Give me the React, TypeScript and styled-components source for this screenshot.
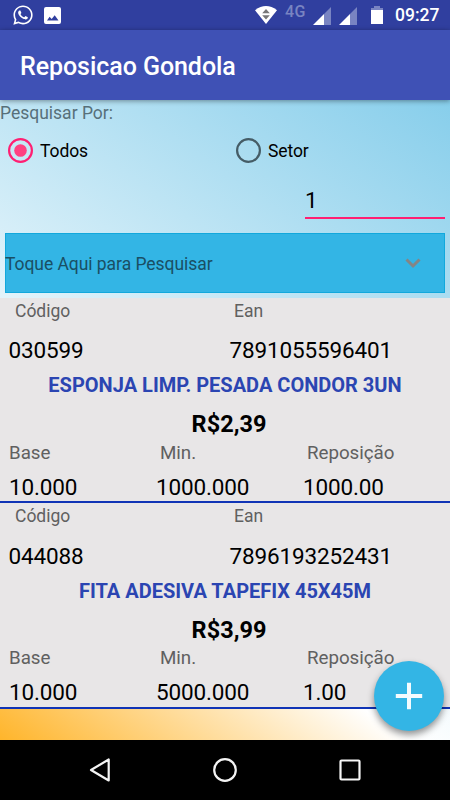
import React from "react";
import styled, { createGlobalStyle } from "styled-components";
import { FaWhatsapp } from "react-icons/fa";

const GlobalStyle = createGlobalStyle`
  * { box-sizing: border-box; }
  body { margin: 0; background: #000; font-family: Roboto, "Noto Sans", sans-serif; }
`;

const Screen = styled.div`
  position: relative;
  display: flex;
  flex-direction: column;
  width: 450px;
  height: 800px;
  overflow: hidden;
`;

const StatusBar = styled.header`
  display: flex;
  align-items: center;
  justify-content: space-between;
  height: 30px;
  flex: none;
  padding: 0 10px 0 12px;
  background: #303f9f;
  color: #fff;
`;

const StatusGroup = styled.div`
  display: flex;
  align-items: center;
  svg { display: block; }
`;

const NotificationGroup = styled(StatusGroup)`
  gap: 10px;
`;

const Network = styled.span`
  width: 22px;
  height: 30px;
  margin: 0 6px 0 8px;
  color: #7984c2;
  font-size: 16px;
  font-weight: 500;
  line-height: 23px;
  letter-spacing: 0.4px;
`;

const SignalPair = styled.div`
  display: flex;
  gap: 8px;
  margin: 2px 14px 0 0;
`;

const Clock = styled.time`
  width: 45px;
  margin-left: 12px;
  font-size: 17.5px;
  font-weight: 500;
  line-height: 32px;
  white-space: nowrap;
`;

const AppBar = styled.div`
  z-index: 1;
  display: flex;
  align-items: center;
  height: 70px;
  flex: none;
  padding: 4px 0 0 20px;
  background: #3f51b5;
  box-shadow: 0 1px 5px rgba(0, 0, 0, 0.4);
`;

const Title = styled.h1`
  margin: 0;
  color: #fff;
  font-size: 25px;
  font-weight: 500;
  line-height: 30px;
  letter-spacing: -0.06px;
`;

const Content = styled.main`
  display: flex;
  flex-direction: column;
  height: 640px;
  flex: none;
  background: linear-gradient(35.11deg, #ffb52b 0%, #ffffff 30%, #87ceeb 100%);
`;

const FilterLabel = styled.div`
  height: 25px;
  color: #57707a;
  font-size: 17.5px;
  line-height: 26px;
`;

const Options = styled.div`
  display: grid;
  grid-template-columns: 228px 1fr;
  height: 50px;
`;

const Option = styled.label`
  display: flex;
  align-items: center;
  gap: 7.5px;
  padding: 1px 0 0 7.5px;
  color: #000;
  font-size: 17.5px;
  line-height: 20px;
  letter-spacing: -0.1px;
`;

const RadioIcon = styled.svg`
  display: block;
  width: 25px;
  height: 25px;
`;

const QuantityField = styled.div`
  width: 140px;
  height: 44px;
  margin: 0 5px 0 auto;
  border-bottom: 2px solid #ff1f72;
  color: #000;
  font-size: 22.5px;
  line-height: 51px;
`;

const Spinner = styled.div`
  display: flex;
  align-items: center;
  justify-content: space-between;
  height: 60px;
  margin: 14px 5px 4.5px;
  padding-right: 23px;
  border: 1px solid #12a8dc;
  background: #33b5e5;
  color: #1a4f64;
  font-size: 17.5px;
  line-height: 22px;
`;

const SpinnerText = styled.span`
  margin: 1px 0 0 -1px;
  letter-spacing: -0.05px;
`;

const ItemCard = styled.article`
  display: flex;
  flex-direction: column;
  height: 205.5px;
  flex: none;
  border-bottom: 2px solid #1034b6;
  background: #e8e6e7;
`;

const CodeLabels = styled.div`
  display: grid;
  grid-template-columns: 219px 1fr;
  padding-left: 15px;
  color: #606060;
  font-size: 17.5px;
  line-height: 26px;
`;

const CodeValues = styled.div`
  display: grid;
  grid-template-columns: 221px 1fr;
  margin-top: 9.5px;
  padding-left: 8.5px;
  color: #000;
  font-size: 22.5px;
  line-height: 35px;
  letter-spacing: -0.15px;
`;

const ProductName = styled.div`
  margin-top: 5px;
  color: #2b45b2;
  font-size: 20px;
  font-weight: 700;
  line-height: 25px;
  text-align: center;
  white-space: nowrap;
`;

const Price = styled.div`
  margin-top: 8px;
  padding-left: 8px;
  color: #000;
  font-size: 23.5px;
  font-weight: 700;
  line-height: 36px;
  text-align: center;
`;

const StockLabels = styled.div`
  display: grid;
  grid-template-columns: 151px 147px 1fr;
  margin-top: 0.9px;
  padding-left: 9px;
  color: #606060;
  font-size: 18.75px;
  line-height: 20px;
  letter-spacing: -0.04px;
`;

const StockValues = styled.div`
  display: grid;
  grid-template-columns: 147px 147px 1fr;
  margin-top: 10.9px;
  padding-left: 9px;
  color: #000;
  font-size: 22.5px;
  line-height: 26px;
  letter-spacing: -0.15px;
`;

const AddButton = styled.button`
  position: absolute;
  right: 6px;
  bottom: 69px;
  display: grid;
  place-items: center;
  width: 70px;
  height: 70px;
  padding: 0;
  border: 0;
  border-radius: 50%;
  background: #33b5e5;
  box-shadow: 0 4px 7px rgba(0, 0, 0, 0.42);
`;

const NavigationBar = styled.nav`
  z-index: 1;
  display: flex;
  align-items: center;
  justify-content: center;
  gap: 101px;
  height: 60px;
  flex: none;
  background: #000;
`;

interface Product {
  code: string;
  ean: string;
  name: string;
  price: string;
  base: string;
  min: string;
  restock: string;
}

const products: Product[] = [
  { code: "030599", ean: "7891055596401", name: "ESPONJA LIMP. PESADA CONDOR 3UN", price: "R$2,39", base: "10.000", min: "1000.000", restock: "1000.00" },
  { code: "044088", ean: "7896193252431", name: "FITA ADESIVA TAPEFIX 45X45M", price: "R$3,99", base: "10.000", min: "5000.000", restock: "1.00" },
];

const Radio = ({ checked = false }: { checked?: boolean }) => (
  <RadioIcon viewBox="0 0 25 25">
    <circle cx="12.5" cy="12.5" r="11.4" fill="none" stroke={checked ? "#ff1f72" : "#455c66"} strokeWidth="2.2" />
    {checked && <circle cx="12.5" cy="12.5" r="6.3" fill="#ff4081" />}
  </RadioIcon>
);

const SignalIcon = () => (
  <svg width="18" height="18" viewBox="0 0 18 18">
    <path d="M0 18 11 7v11z" fill="#fff" />
    <path d="M11 7 18 0v18h-7z" fill="#7984c2" />
  </svg>
);

const WifiIcon = () => (
  <svg width="22" height="18" viewBox="0 0 22 18">
    <path d="M0 4.2Q11-4 22 4.2L11 18Z" fill="#fff" />
    <path d="m7.2 7.2 3.8-4.2 3.8 4.2ZM7.2 9.2h7.6L11 13.4Z" fill="#777" />
  </svg>
);

const BatteryIcon = () => (
  <svg width="12" height="18" viewBox="0 0 12 18">
    <path d="M3 0h6v2h3v3H0V2h3z" fill="#7984c2" />
    <path d="M0 4h12v14H0z" fill="#fff" />
  </svg>
);

const Item = ({ product }: { product: Product }) => (
  <ItemCard>
    <CodeLabels><span>Código</span><span>Ean</span></CodeLabels>
    <CodeValues><span>{product.code}</span><span>{product.ean}</span></CodeValues>
    <ProductName>{product.name}</ProductName>
    <Price>{product.price}</Price>
    <StockLabels><span>Base</span><span>Min.</span><span>Reposição</span></StockLabels>
    <StockValues><span>{product.base}</span><span>{product.min}</span><span>{product.restock}</span></StockValues>
  </ItemCard>
);

export default function App() {
  return (
    <>
      <GlobalStyle />
      <Screen>
        <StatusBar>
          <NotificationGroup>
            <FaWhatsapp size={22} />
            <svg width="17" height="17" viewBox="0 0 17 17">
              <path fillRule="evenodd" fill="#fff" d="M2 0h13a2 2 0 0 1 2 2v13a2 2 0 0 1-2 2H2a2 2 0 0 1-2-2V2a2 2 0 0 1 2-2ZM3 13.5h11.5L10.7 8.3 7.7 12 5.6 9.7Z" />
            </svg>
          </NotificationGroup>
          <StatusGroup>
            <WifiIcon />
            <Network>4G</Network>
            <SignalPair><SignalIcon /><SignalIcon /></SignalPair>
            <BatteryIcon />
            <Clock>09:27</Clock>
          </StatusGroup>
        </StatusBar>
        <AppBar><Title>Reposicao Gondola</Title></AppBar>
        <Content>
          <FilterLabel>Pesquisar Por:</FilterLabel>
          <Options>
            <Option><Radio checked />Todos</Option>
            <Option><Radio />Setor</Option>
          </Options>
          <QuantityField>1</QuantityField>
          <Spinner>
            <SpinnerText>Toque Aqui para Pesquisar</SpinnerText>
            <svg width="16" height="11" viewBox="0 0 16 11">
              <path d="m1.5 1.5 6.5 6.5 6.5-6.5" fill="none" stroke="#858585" strokeWidth="3" />
            </svg>
          </Spinner>
          {products.map((product) => <Item key={product.code} product={product} />)}
        </Content>
        <NavigationBar>
          <svg width="24" height="24" viewBox="0 0 24 24">
            <path d="M20.7 1.5v21L3 12Z" fill="none" stroke="#f4f4f4" strokeWidth="2.2" strokeLinejoin="round" />
          </svg>
          <svg width="24" height="24" viewBox="0 0 24 24">
            <circle cx="12" cy="12" r="10.8" fill="none" stroke="#f4f4f4" strokeWidth="2.2" />
          </svg>
          <svg width="24" height="24" viewBox="0 0 24 24">
            <rect x="2.5" y="2.5" width="19" height="19" rx="1" fill="none" stroke="#f4f4f4" strokeWidth="2.2" />
          </svg>
        </NavigationBar>
        <AddButton aria-label="Adicionar">
          <svg width="28" height="28" viewBox="0 0 28 28">
            <path d="M14 .8v26.4M.8 14h26.4" stroke="#f4fbfe" strokeWidth="4" />
          </svg>
        </AddButton>
      </Screen>
    </>
  );
}
